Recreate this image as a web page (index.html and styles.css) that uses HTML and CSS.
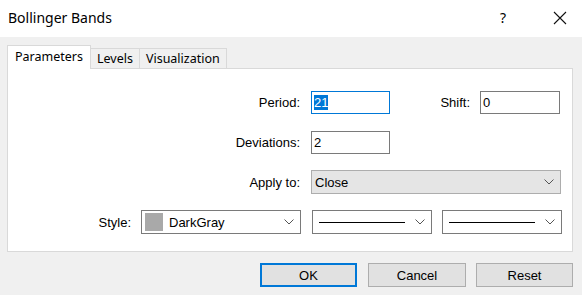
FILE: index.html
```html
<!DOCTYPE html>
<html lang="en">
<head>
    <meta charset="UTF-8">
    <title>Bollinger Bands</title>
    <link rel="stylesheet" href="styles.css">
</head>
<body>
    <div class="title-bar">
        <span class="title">Bollinger Bands</span>
        <span class="title-help">?</span>
        <span class="title-close">
            <svg width="14" height="14" viewBox="0 0 14 14"><path d="M1 1 L13 13 M13 1 L1 13" stroke="#111" stroke-width="1.1" fill="none"/></svg>
        </span>
    </div>

    <div class="tabs">
        <div class="tab active">Parameters</div>
        <div class="tab">Levels</div>
        <div class="tab">Visualization</div>
    </div>

    <div class="panel">
        <div class="row">
            <label class="label wide">Period:</label>
            <div class="field focused"><span class="selected">21</span></div>
            <label class="label shift">Shift:</label>
            <div class="field shift-field">0</div>
        </div>
        <div class="row">
            <label class="label wide">Deviations:</label>
            <div class="field">2</div>
        </div>
        <div class="row">
            <label class="label wide">Apply to:</label>
            <div class="select gray apply">
                <span>Close</span>
                <svg class="chevron" width="10" height="6" viewBox="0 0 10 6"><path d="M0.5 0.5 L5 5 L9.5 0.5" stroke="#555" fill="none"/></svg>
            </div>
        </div>
        <div class="row">
            <label class="label narrow">Style:</label>
            <div class="select color-select">
                <span class="swatch"></span>
                <span>DarkGray</span>
                <svg class="chevron" width="10" height="6" viewBox="0 0 10 6"><path d="M0.5 0.5 L5 5 L9.5 0.5" stroke="#555" fill="none"/></svg>
            </div>
            <div class="select line-select">
                <span class="line"></span>
                <svg class="chevron" width="10" height="6" viewBox="0 0 10 6"><path d="M0.5 0.5 L5 5 L9.5 0.5" stroke="#555" fill="none"/></svg>
            </div>
            <div class="select line-select">
                <span class="line"></span>
                <svg class="chevron" width="10" height="6" viewBox="0 0 10 6"><path d="M0.5 0.5 L5 5 L9.5 0.5" stroke="#555" fill="none"/></svg>
            </div>
        </div>
    </div>

    <div class="buttons">
        <button class="btn default">OK</button>
        <button class="btn cancel">Cancel</button>
        <button class="btn">Reset</button>
    </div>
</body>
</html>
```

FILE: styles.css
```css
body {
    margin: 0;
    background: #f0f0f0;
    font-family: 'Liberation Sans', Arial, sans-serif;
    font-size: 13px;
    color: #000;
    height: 295px;
    overflow: hidden;
}

.title-bar {
    height: 37px;
    background: #fff;
    display: flex;
    align-items: center;
    padding-left: 8px;
}

.title {
    font-family: 'Noto Sans', sans-serif;
    font-size: 14px;
    flex: 1;
    margin-top: -2px;
}

.title-help {
    font-family: 'Noto Sans', sans-serif;
    font-size: 14px;
    width: 53px;
    text-align: left;
    margin-top: -2px;
}

.title-close {
    width: 29px;
    display: flex;
    align-items: center;
    margin-top: -1px;
}

.tabs {
    display: flex;
    align-items: flex-end;
    padding-left: 7px;
    margin-top: 8px;
    height: 23px;
    font-family: 'Noto Sans', sans-serif;
    font-size: 12.5px;
}

.tab {
    height: 20px;
    line-height: 20px;
    padding: 0 6px;
    border: 1px solid #d9d9d9;
    border-bottom: none;
    background: #f0f0f0;
    margin-left: -1px;
    box-sizing: border-box;
}

.tab.active {
    height: 24px;
    line-height: 21px;
    background: #fff;
    padding: 0 7px;
    margin-left: 0;
    margin-bottom: -1px;
    position: relative;
    z-index: 1;
    border-color: #d9d9d9;
}

.panel {
    margin: 0 9px 0 7px;
    height: 184px;
    box-sizing: border-box;
    background: #fff;
    border: 1px solid #d9d9d9;
    padding-top: 21px;
}

.row {
    display: flex;
    align-items: center;
    height: 24px;
    margin-bottom: 16px;
}

.label {
    text-align: right;
    flex: none;
}

.label.wide {
    width: 292px;
    margin-right: 11px;
}

.label.narrow {
    width: 123px;
    margin-right: 10px;
}

.label.shift {
    width: 80px;
    margin-right: 10px;
}

.field {
    width: 79px;
    height: 23px;
    box-sizing: border-box;
    border: 1px solid #7a7a7a;
    padding: 3px 2px;
    line-height: 15px;
}

.field.focused {
    border-color: #0078d7;
}

.field.shift-field {
    width: 80px;
}

.selected {
    background: #0078d7;
    color: #fff;
}

.select {
    height: 24px;
    box-sizing: border-box;
    border: 1px solid #7a7a7a;
    display: flex;
    align-items: center;
    padding: 0 2px 0 3px;
    background: #fff;
}

.select.gray {
    background: #e5e5e5;
    border-color: #adadad;
}

.select.apply {
    width: 250px;
}

.select .chevron {
    margin-left: auto;
    margin-right: 4px;
}

.color-select {
    width: 160px;
    margin-right: 11px;
}

.swatch {
    width: 18px;
    height: 18px;
    background: #a9a9a9;
    margin-right: 6px;
}

.line-select {
    width: 120px;
    margin-right: 10px;
    padding-left: 6px;
}

.line {
    width: 86px;
    height: 1px;
    background: #000;
}

.buttons {
    display: flex;
    justify-content: flex-end;
    gap: 11px;
    padding-right: 9px;
    margin-top: 11px;
}

.btn {
    width: 97px;
    height: 24px;
    box-sizing: border-box;
    background: #e1e1e1;
    border: 1px solid #adadad;
    font-family: 'Liberation Sans', Arial, sans-serif;
    font-size: 13px;
    padding: 0;
    color: #000;
}

.btn.cancel {
    width: 98px;
    margin-right: -1px;
}

.btn.default {
    border: 2px solid #0078d7;
}
```
